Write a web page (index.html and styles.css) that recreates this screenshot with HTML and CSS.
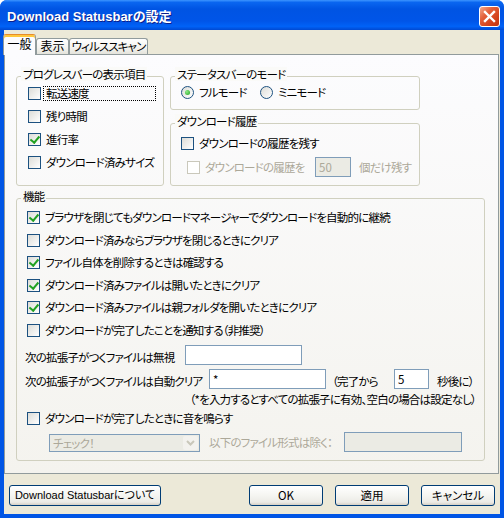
FILE: index.html
```html
<!DOCTYPE html>
<html lang="ja">
<head>
    <meta charset="UTF-8">
    <title>Download Statusbarの設定</title>
    <link rel="stylesheet" href="styles.css">
</head>
<body>
    <div class="window">
        <div class="titlebar">
            <span class="title">Download Statusbarの設定</span>
            <button class="close-btn" type="button">
                <svg width="13" height="13" viewBox="0 0 13 13">
                    <path d="M2 2 L11 11 M11 2 L2 11" stroke="#fff" stroke-width="2.4" stroke-linecap="square"/>
                </svg>
            </button>
        </div>

        <div class="client">
            <div class="tabs">
                <div class="tab tab-general active">一般</div>
                <div class="tab tab-view">表示</div>
                <div class="tab tab-virus">ウィルススキャン</div>
            </div>

            <div class="tab-panel">
                <div class="top-row">
                    <!-- progress bar items -->
                    <div class="group group-progress">
                        <div class="group-title">プログレスバーの表示項目</div>
                        <div class="group-body">
                            <div class="check-row">
                                <span class="checkbox"></span>
                                <span class="check-label focus">転送速度</span>
                            </div>
                            <div class="check-row">
                                <span class="checkbox"></span>
                                <span class="check-label">残り時間</span>
                            </div>
                            <div class="check-row">
                                <span class="checkbox checked"></span>
                                <span class="check-label">進行率</span>
                            </div>
                            <div class="check-row">
                                <span class="checkbox"></span>
                                <span class="check-label">ダウンロード済みサイズ</span>
                            </div>
                        </div>
                    </div>

                    <div class="side-col">
                        <div class="group group-mode">
                            <div class="group-title">ステータスバーのモード</div>
                            <div class="group-body radio-row">
                                <label class="option option-full">
                                    <span class="radio checked"></span>
                                    <span class="check-label">フルモード</span>
                                </label>
                                <label class="option">
                                    <span class="radio"></span>
                                    <span class="check-label">ミニモード</span>
                                </label>
                            </div>
                        </div>

                        <div class="group group-history">
                            <div class="group-title">ダウンロード履歴</div>
                            <div class="group-body">
                                <div class="check-row history-keep">
                                    <span class="checkbox"></span>
                                    <span class="check-label">ダウンロードの履歴を残す</span>
                                </div>
                                <div class="check-row history-count disabled">
                                    <span class="checkbox"></span>
                                    <span class="check-label count-label">ダウンロードの履歴を</span>
                                    <input class="textbox count-box" type="text" value="50" disabled>
                                    <span class="count-suffix">個だけ残す</span>
                                </div>
                            </div>
                        </div>
                    </div>
                </div>

                <!-- features -->
                <div class="group group-features">
                    <div class="group-title">機能</div>
                    <div class="group-body">
                        <div class="check-list">
                            <div class="check-row">
                                <span class="checkbox checked"></span>
                                <span class="check-label">ブラウザを閉じてもダウンロードマネージャーでダウンロードを自動的に継続</span>
                            </div>
                            <div class="check-row">
                                <span class="checkbox"></span>
                                <span class="check-label">ダウンロード済みならブラウザを閉じるときにクリア</span>
                            </div>
                            <div class="check-row">
                                <span class="checkbox checked"></span>
                                <span class="check-label">ファイル自体を削除するときは確認する</span>
                            </div>
                            <div class="check-row">
                                <span class="checkbox checked"></span>
                                <span class="check-label">ダウンロード済みファイルは開いたときにクリア</span>
                            </div>
                            <div class="check-row">
                                <span class="checkbox checked"></span>
                                <span class="check-label">ダウンロード済みファイルは親フォルダを開いたときにクリア</span>
                            </div>
                            <div class="check-row">
                                <span class="checkbox"></span>
                                <span class="check-label">ダウンロードが完了したことを通知する（非推奨）</span>
                            </div>
                        </div>

                        <div class="field-row ignore-row">
                            <span class="field-label ignore-label">次の拡張子がつくファイルは無視</span>
                            <input class="textbox ext-box" type="text" value="">
                        </div>
                        <div class="field-row clear-row">
                            <span class="field-label clear-label">次の拡張子がつくファイルは自動クリア</span>
                            <input class="textbox ext-box" type="text" value="*">
                            <span class="field-label delay-label">（完了から</span>
                            <input class="textbox secs-box" type="text" value="5">
                            <span class="field-label secs-label">秒後に）</span>
                        </div>
                        <p class="note">（*を入力するとすべての拡張子に有効、空白の場合は設定なし）</p>

                        <div class="check-list sound-list">
                            <div class="check-row">
                                <span class="checkbox"></span>
                                <span class="check-label">ダウンロードが完了したときに音を鳴らす</span>
                            </div>
                        </div>
                        <div class="field-row sound-row">
                            <div class="combo">
                                <span class="combo-text">チェック！</span>
                                <span class="combo-btn">
                                    <svg width="9" height="6" viewBox="0 0 9 6">
                                        <path d="M1 1 L4.5 4.5 L8 1" fill="none" stroke="#C9C7BA" stroke-width="2"/>
                                    </svg>
                                </span>
                            </div>
                            <span class="field-label exclude-label">以下のファイル形式は除く：</span>
                            <input class="textbox exclude-box" type="text" value="" disabled>
                        </div>
                    </div>
                </div>
            </div>

            <div class="dialog-buttons">
                <button class="btn btn-about" type="button">Download Statusbarについて</button>
                <button class="btn btn-ok" type="button">OK</button>
                <button class="btn" type="button">適用</button>
                <button class="btn" type="button">キャンセル</button>
            </div>
        </div>
    </div>
</body>
</html>
```

FILE: styles.css
```css
* {
    box-sizing: border-box;
}

body {
    margin: 0;
    background: #fff;
    font-family: "Noto Sans CJK JP", sans-serif;
    font-size: 11.5px;
    letter-spacing: -0.8px;
    color: #000;
    font-feature-settings: "palt";
}

/* window frame */
.window {
    width: 504px;
    height: 518px;
    display: flex;
    flex-direction: column;
    background: #0055E5;
    border-radius: 7px 7px 0 0;
    overflow: hidden;
}

.titlebar {
    flex: none;
    height: 30px;
    display: flex;
    align-items: center;
    justify-content: space-between;
    padding: 1px 4px 0 7px;
    background: linear-gradient(to bottom, #3D95FF 0%, #0A66F0 8%, #0054E3 30%, #0055E8 70%, #0062F7 88%, #0049D2 100%);
}

.title {
    color: #fff;
    font-family: "Liberation Sans", "Noto Sans CJK JP", sans-serif;
    font-weight: bold;
    font-size: 13px;
    letter-spacing: 0;
    text-shadow: 1px 1px #0A1E8C;
}

.close-btn {
    width: 21px;
    height: 21px;
    padding: 0;
    border: 1px solid #fff;
    border-radius: 3px;
    background: linear-gradient(135deg, #F3A98E 0%, #E3603A 35%, #D4421B 70%, #C2350F 100%);
    display: flex;
    align-items: center;
    justify-content: center;
    margin-top: 1px;
}

.client {
    flex: 1;
    margin: 0 4px 4px;
    background: #ECE9D8;
    display: flex;
    flex-direction: column;
}

/* tabs */
.tabs {
    flex: none;
    height: 24px;
    display: flex;
    align-items: flex-end;
    margin-left: -1px;
}

.tab {
    height: 16px;
    line-height: 14px;
    font-size: 12px;
    letter-spacing: 0;
    text-align: center;
    white-space: nowrap;
    border: 1px solid #919B9C;
    border-bottom: none;
    border-radius: 3px 3px 0 0;
    background: linear-gradient(to bottom, #FFFFFF, #F3F3EF 60%, #E4E3DB);
}

.tab.active {
    height: 21px;
    margin-bottom: -1px;
    padding-top: 2px;
    border-top-color: #E68B2C;
    box-shadow: inset 0 2px #FFC83C;
    background: #FCFCFE;
    position: relative;
    z-index: 1;
}

.tab-general {
    width: 33px;
}

.tab-view {
    width: 33px;
}

.tab-virus {
    width: 79px;
    font-size: 11.5px;
    letter-spacing: -0.9px;
}

.tab-panel {
    flex: 1;
    margin-right: 1px;
    border: 1px solid #919B9C;
    background: linear-gradient(to bottom, #FCFCFE, #F4F3EE);
    padding: 21px 13px 11px 11px;
}

/* group boxes */
.top-row {
    display: flex;
    gap: 6px;
}

.group {
    border: 1px solid #D0D0BF;
    border-radius: 3px;
}

.group-title {
    display: table;
    margin: -10px 0 0 4px;
    padding: 0 2px;
    line-height: 14px;
    white-space: nowrap;
    background: #FAFAF8;
}

.group-progress {
    width: 148px;
}

.group-progress .group-body {
    padding: 1px 0 0 11px;
}

.side-col {
    width: 250px;
}

.group-mode .group-body {
    padding: 0 0 5px 10px;
}

.group-history {
    margin-top: 13px;
}

.group-history .group-body {
    padding: 0 0 6px 10px;
}

.group-features {
    margin-top: 12px;
}

.group-features .group-body {
    padding: 0 8px 8px;
}

.group-features .group-title {
    background: #F8F8F5;
}

/* check boxes and radios */
.check-row {
    display: flex;
    align-items: center;
    height: 23px;
}

.checkbox,
.radio {
    flex: none;
    width: 13px;
    height: 13px;
    border: 1px solid #1C5180;
    background: linear-gradient(135deg, #DCDCD7, #FFFFFF);
    display: flex;
    align-items: center;
    justify-content: center;
}

.checkbox.checked::after {
    content: "";
    width: 3.5px;
    height: 7px;
    margin-top: -2px;
    border: solid #21A121;
    border-width: 0 2.5px 2.5px 0;
    transform: rotate(40deg);
}

.radio {
    border-radius: 50%;
}

.radio.checked::after {
    content: "";
    width: 5px;
    height: 5px;
    border-radius: 50%;
    background: radial-gradient(circle at 35% 35%, #8CEB86, #21A121);
}

.check-label {
    margin-left: 2px;
    padding: 0 2px;
    border: 1px dotted transparent;
    line-height: 13px;
    white-space: nowrap;
}

.check-label.focus {
    flex: 1;
    margin-right: 7px;
    border-color: #000;
}

/* height includes the 5px bottom padding of the group body */
.radio-row {
    display: flex;
    align-items: center;
    height: 28px;
}

.option {
    display: flex;
    align-items: center;
}

.option-full {
    width: 79px;
}

.history-keep {
    margin-top: 3.5px;
}

.history-count {
    margin-top: 1px;
    margin-left: 6px;
}

.disabled .checkbox {
    border-color: #CAC8BB;
    background: #fff;
}

.disabled .check-label,
.disabled .count-suffix {
    color: #ACA899;
}

.count-label {
    width: 113px;
    flex: none;
}

.count-suffix {
    margin-left: 8px;
}

/* text boxes */
.textbox {
    flex: none;
    height: 20px;
    margin: 0;
    padding: 0 3px;
    border: 1px solid #7F9DB9;
    background: #fff;
    font: inherit;
    letter-spacing: 0;
    color: #000;
    line-height: 16px;
}

.textbox:disabled {
    background: #EBEBE4;
    color: #ACA899;
}

.count-box {
    width: 36px;
}

.ext-box {
    width: 117px;
}

.secs-box {
    width: 35px;
}

.exclude-box {
    width: 118px;
}

/* feature rows */
.check-list {
    margin-left: 2px;
    padding-top: 4px;
}

.check-list .check-row {
    height: 22.5px;
}

.field-row {
    display: flex;
    align-items: flex-start;
    height: 20px;
}

.field-label {
    flex: none;
    padding-top: 5px;
    line-height: 14px;
    white-space: nowrap;
}

.ignore-row {
    margin-top: 3px;
}

.ignore-label {
    width: 160px;
}

.clear-row {
    margin-top: 4px;
}

.clear-label {
    width: 184px;
}

.delay-label {
    width: 62px;
    margin-left: 6px;
}

.secs-label {
    margin-left: 8px;
}

.note {
    margin: 3px 0 0;
    line-height: 14px;
    text-align: right;
    white-space: nowrap;
}

.sound-list {
    margin-top: 2px;
    padding-top: 0;
}

.sound-row {
    margin-top: 1.5px;
    margin-left: 24px;
}

.combo {
    flex: none;
    width: 151px;
    height: 18px;
    margin-top: 2px;
    border: 1px solid #7F9DB9;
    background: #EBEBE4;
    display: flex;
    align-items: center;
    justify-content: space-between;
}

.combo-text {
    padding-left: 3px;
    color: #ACA899;
    line-height: 14px;
}

.combo-btn {
    width: 15px;
    height: 14px;
    margin-right: 1px;
    border-radius: 2px;
    background: #F3F2EE;
    display: flex;
    align-items: center;
    justify-content: center;
}

.exclude-label {
    width: 135px;
    margin-left: 9px;
    padding-top: 3px;
    color: #ACA899;
}

/* dialog buttons */
.dialog-buttons {
    flex: none;
    display: flex;
    gap: 12px;
    height: 21px;
    margin: 11px 0 8px;
    padding: 0 5px;
}

.btn {
    width: 74px;
    height: 21px;
    padding: 0;
    border: 1px solid #003C74;
    border-radius: 3px;
    background: linear-gradient(to bottom, #FFFFFF, #F5F5F1 50%, #ECEBE6 85%, #D6D0C5);
    font: inherit;
    color: #000;
    line-height: 17px;
    white-space: nowrap;
}

.btn-about {
    width: 152px;
    font-family: "Liberation Sans", "Noto Sans CJK JP", sans-serif;
    font-size: 11px;
    letter-spacing: 0;
}

.btn-ok {
    margin-left: auto;
}
```
